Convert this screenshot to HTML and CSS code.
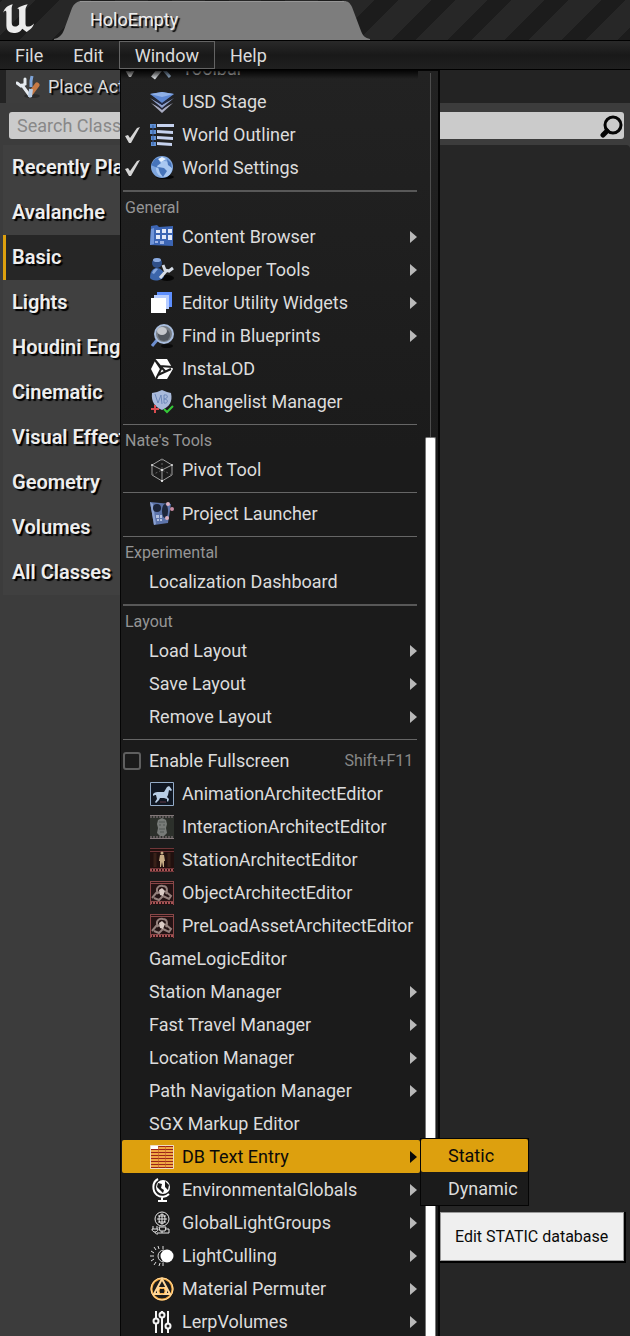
FILE: index.html
```html
<!DOCTYPE html>
<html lang="en">
<head>
<meta charset="utf-8">
<title>HoloEmpty</title>
<link rel="stylesheet" href="styles.css">
</head>
<body>
<div class="app">
  <header class="titlebar">
    <svg class="logo" viewBox="0 0 32 32" aria-hidden="true"><path fill="#ececec" d="M3 12C4 8 7 5 12 4c-1 2-1 3-1 5v12c0 3 1 4 3 4 2 0 3-1 4-2V10c0-2-1-2-2-2 3-2 6-3 10-4-1 2-2 3-2 5v13c0 2 1 3 2 3 2 0 4-1 6-3-1 4-4 6-7 8l-4-3c-2 3-4 4-8 4-4 0-7-2-7-7V12c0-2-1-3-3 0z"/></svg>
    <div class="doc-tab">
      <svg class="tab-edge" viewBox="0 0 26 39" aria-hidden="true"><path fill="#7d7d7d" d="M0 39V38C5 37 8 34 10 29L18 7C20 3 22 1 26 0V39z"/></svg>
      <span class="doc-tab-label">HoloEmpty</span>
      <svg class="tab-edge" viewBox="0 0 26 39" aria-hidden="true"><path fill="#7d7d7d" d="M26 39V38C21 37 19 35 17 30L8 6C6 2 4 0 0 0V39z"/></svg>
    </div>
  </header>

  <nav class="menubar">
    <button type="button">File</button>
    <button type="button">Edit</button>
    <button type="button" class="open">Window</button>
    <button type="button">Help</button>
  </nav>

  <main class="panel">
    <div class="panel-tabs">
      <div class="panel-tab">
        <svg class="icon" viewBox="0 0 24 24" aria-hidden="true"><ellipse cx="16" cy="21" rx="8" ry="2" fill="#2a2a2a"/><path d="M15 18l6-8" stroke="#c77a45" stroke-width="5" stroke-linecap="round"/><path d="M15 12V6l1-5" fill="none" stroke="#7ea4d8" stroke-width="3"/><path d="M1 8l4 3 4-2V4M6 10l8 11" fill="none" stroke="#e6ebf0" stroke-width="3" stroke-linecap="round"/><path d="M15 14l-1 8" stroke="#b8cbe2" stroke-width="4"/></svg>
        Place Actors
      </div>
    </div>
    <div class="search">
      <input type="text" placeholder="Search Classes" aria-label="Search Classes">
      <svg class="icon" viewBox="0 0 24 24" aria-hidden="true"><circle cx="13" cy="11" r="8" fill="none" stroke="#050505" stroke-width="3"/><path d="M7 17l-4 4" stroke="#050505" stroke-width="5" stroke-linecap="round"/></svg>
    </div>
    <div class="panel-body">
      <div class="categories">
        <button type="button">Recently Placed</button>
        <button type="button">Avalanche</button>
        <button type="button" class="selected">Basic</button>
        <button type="button">Lights</button>
        <button type="button">Houdini Engine</button>
        <button type="button">Cinematic</button>
        <button type="button">Visual Effects</button>
        <button type="button">Geometry</button>
        <button type="button">Volumes</button>
        <button type="button">All Classes</button>
      </div>
      <div class="results"></div>
    </div>
  </main>

  <div class="dropdown">
    <div class="menu-list">
      <button type="button" class="item"><svg class="check" viewBox="0 0 18 18"><path d="M2 10l3-1 2 3 7-10 3-1L8 17H6z"/></svg><svg class="icon" viewBox="0 0 24 24"><path d="M3 21L16 5" stroke="#dfe3e6" stroke-width="5"/><path d="M8 6l12 14" stroke="#9db9d6" stroke-width="3"/></svg>Toolbar</button>
      <button type="button" class="item"><span class="check"></span><svg class="icon" viewBox="0 0 24 24"><path fill="#a8abc0" d="M1 13l11 6 11-6-11 10z"/><path fill="#25263a" d="M1 11l11 7 11-7-11 9z"/><path fill="#8d9fce" d="M0 8l12 7 12-7-12 10z"/><path fill="#202b51" d="M0 6l12 7 12-7-12 9z"/><path fill="#5d87d3" d="M0 4l12-2 12 2-12 9z"/><path fill="#8fb0e6" d="M0 4l12-2 12 2-12 3z"/></svg>USD Stage</button>
      <button type="button" class="item"><svg class="check" viewBox="0 0 18 18"><path d="M2 10l3-1 2 3 7-10 3-1L8 17H6z"/></svg><svg class="icon" viewBox="0 0 24 24"><path fill="#5e8fd3" d="M0 1h6v4H0zM0 7h6v4H0zM1 13h5v4H1zM1 19h5v4H1z"/><path d="M3 2v20" stroke="#34599b" stroke-width="1"/><path fill="#c6d2ee" d="M7 1h17v3L7 4zM7 7l16 1v3L7 10zM7 13l16 1v3L7 16zM7 19l15 1v3L7 22z"/></svg>World Outliner</button>
      <button type="button" class="item"><svg class="check" viewBox="0 0 18 18"><path d="M2 10l3-1 2 3 7-10 3-1L8 17H6z"/></svg><svg class="icon" viewBox="0 0 24 24"><ellipse cx="15" cy="21" rx="9" ry="2" fill="#060606"/><circle cx="12" cy="11" r="11" fill="#7ea6df"/><circle cx="14" cy="13" r="8" fill="#a9c8f1"/><path fill="#4674ba" d="M1 9l4-6 6-2-2 4 2 2-4 3 1 2-5-2zM8 11l6 1 3 3-4 6-3-4zM17 3l4 4 1 5-4-3z"/><path fill="#e7f2ff" d="M8 3l4-2 4 2-5 3z"/></svg>World Settings</button>

      <hr class="strong">
      <h2>General</h2>
      <button type="button" class="item sub"><span class="check"></span><svg class="icon" viewBox="0 0 24 24"><path fill="#3c65b4" d="M1 1l6-1 2 2 14-1v20L0 20z"/><path fill="#7094d8" d="M1 4l3-1v16l-4 1z"/><path fill="#e3e9f9" d="M6 5h4v3H6zM12 4h4v4h-4zM18 4h4v4h-4zM6 10h4v4H6zM12 10h4v4h-4zM18 10h4v5h-4z"/><path fill="#9cb2e4" d="M5 16h3v2H5zM10 16h4v3h-4z"/></svg>Content Browser</button>
      <button type="button" class="item sub"><span class="check"></span><svg class="icon" viewBox="0 0 24 24"><ellipse cx="17" cy="20" rx="7" ry="3" fill="#070707"/><path fill="#3c65aa" d="M0 20c0-8 4-10 7-10s8 3 7 8-12 6-14 2z"/><circle cx="7" cy="5" r="5" fill="#2f4f88"/><ellipse cx="7" cy="2" rx="4" ry="2" fill="#8cabe0"/><path fill="#85a6dc" d="M2 15c2-5 4-5 6-4l-4 5z"/><path d="M10 20l7-8M13 7l2 5 4 1 4-3" fill="none" stroke="#d5dce6" stroke-width="3"/></svg>Developer Tools</button>
      <button type="button" class="item sub"><span class="check"></span><svg class="icon" viewBox="0 0 24 24"><path fill="#5d8fff" d="M7 1h15v15H7z"/><path fill="#b6ccff" d="M4 4h15v14H4z"/><path fill="#fff" d="M1 7h15v15H1z"/></svg>Editor Utility Widgets</button>
      <button type="button" class="item sub"><span class="check"></span><svg class="icon" viewBox="0 0 24 24"><ellipse cx="17" cy="22" rx="6" ry="2" fill="#0a0a0a"/><path d="M7 16l-5 6" stroke="#6d8fd0" stroke-width="3"/><circle cx="14" cy="10" r="9" fill="#777d85" stroke="#a8bddd" stroke-width="2"/><circle cx="14" cy="11" r="6" fill="#51575f"/><ellipse cx="12" cy="7" rx="5" ry="4" fill="#c4c7cc"/></svg>Find in Blueprints</button>
      <button type="button" class="item"><span class="check"></span><svg class="icon" viewBox="0 0 24 24"><path fill="#fff" d="M6 2h11l6 10-6 10H6L1 12z"/><path d="M5 3l6 9-5 10M5 3l5 6 13 1M8 18l13-6M10 9l5 5" fill="none" stroke="#1d1d1d" stroke-width="2"/></svg>InstaLOD</button>
      <button type="button" class="item"><span class="check"></span><svg class="icon" viewBox="0 0 24 24"><path fill="#a9badb" d="M2 3l5-1 5-2 5 2 4 1c2 9-2 14-9 17C5 17 1 12 2 3z"/><path d="M5 4l3 9 3-8 1 9M14 5v8M14 5c5-1 4 4 0 4 5 0 4 5 0 4" fill="none" stroke="#6b86b8" stroke-width="1"/><path d="M1 19h8M5 15v8" stroke="#d94b4f" stroke-width="2"/><path d="M14 19l3 3 6-6" fill="none" stroke="#35c938" stroke-width="2"/></svg>Changelist Manager</button>

      <hr>
      <h2>Nate's Tools</h2>
      <button type="button" class="item"><span class="check"></span><svg class="icon" viewBox="0 0 24 24"><path d="M12 1l10 6v10l-10 6-10-6V7zM2 7l10 5 10-5M12 12v11" fill="none" stroke="#a0a0a0"/><path d="M12 1v11M2 17l10-5 10 5" fill="none" stroke="#666" stroke-dasharray="2 2"/><circle cx="12" cy="12" r="1" fill="#fff"/><circle cx="12" cy="23" r="1" fill="#fff"/><circle cx="2" cy="7" r="1" fill="#ddd"/><circle cx="22" cy="7" r="1" fill="#ddd"/></svg>Pivot Tool</button>

      <hr>
      <button type="button" class="item"><span class="check"></span><svg class="icon" viewBox="0 0 24 24"><path fill="#5d74aa" d="M0 0l21 2-3 19L4 23z"/><path fill="#8aa0d0" d="M0 0l3 2 3 20-2 1z"/><circle cx="7" cy="6" r="4" fill="#1c2438"/><ellipse cx="15" cy="9" rx="3" ry="7" fill="#1e273c"/><path fill="#b3c0df" d="M6 13h3v3H6zM10 13h2v3h-2zM7 17h2v2H7zM10 17h2v2h-2z"/><circle cx="18" cy="2" r="2" fill="#dcb1c2"/><circle cx="22" cy="7" r="2" fill="#c88ca2"/><circle cx="17" cy="16" r="2" fill="#dcb1c2"/></svg>Project Launcher</button>

      <hr>
      <h2>Experimental</h2>
      <button type="button" class="item"><span class="check"></span>Localization Dashboard</button>

      <hr class="strong">
      <h2>Layout</h2>
      <button type="button" class="item sub"><span class="check"></span>Load Layout</button>
      <button type="button" class="item sub"><span class="check"></span>Save Layout</button>
      <button type="button" class="item sub"><span class="check"></span>Remove Layout</button>

      <hr>
      <label class="item"><input type="checkbox">Enable Fullscreen<kbd>Shift+F11</kbd></label>
      <button type="button" class="item"><span class="check"></span><svg class="icon" viewBox="0 0 24 24"><path fill="#101722" stroke="#93abc6" d="M.5.5h23v23H.5z"/><path fill="#b7cde4" d="M3 12c2-2 4-2 6-2h5l3-5 2-1 1 1 2 3-1 1-2-1-1 5-1 2 2 2-1 3-1-1v-2l-3-1-4 0-1 2-3 3-1-1 2-3-1-4c-1 0-2 0-3 1z"/><path d="M10 20h6" stroke="#633b47"/></svg>AnimationArchitectEditor</button>
      <button type="button" class="item"><span class="check"></span><svg class="icon" viewBox="0 0 24 24"><path fill="#2c302b" d="M0 0h24v24H0z"/><path d="M0 2h24M0 22h24" stroke="#5e5859" stroke-width="2" stroke-dasharray="2 1"/><path d="M0 .5h24M0 23.500h24" stroke="#827879"/><path fill="#777b78" d="M8 5l4-2 4 2 1 4-1 4 1 5-3 3h-4l-3-3 1-5-1-4z"/><path d="M9 7h6M9 10h2M13 10h2M9 14h6M10 17h4" stroke="#535854"/></svg>InteractionArchitectEditor</button>
      <button type="button" class="item"><span class="check"></span><svg class="icon" viewBox="0 0 24 24"><path fill="#21100e" d="M0 0h24v24H0z"/><path d="M0 22h24" stroke="#a65355" stroke-width="2" stroke-dasharray="2 1"/><path d="M0 .5h24M0 3.500h24M0 20.500h24M0 23.500h24" stroke="#703638"/><path d="M5 5v14M19 5v14" stroke="#392018" stroke-width="3"/><circle cx="12" cy="5" r="1.500" fill="#c7ac84"/><path fill="#c7ac84" d="M10 7h4l1 6h-1v6h-1l-1-5-1 5h-1v-6H9z"/></svg>StationArchitectEditor</button>
      <button type="button" class="item"><span class="check"></span><svg class="icon" viewBox="0 0 24 24"><path fill="#241314" d="M0 0h24v24H0z"/><path d="M0 22h24" stroke="#a65355" stroke-width="2" stroke-dasharray="2 1"/><path d="M0 .5h24M0 2.500h24M0 20.500h24M.5 0v24M23.500 0v24" stroke="#8a4748"/><path d="M2 17l5-6 3 1M8 13c-3-6 1-9 5-8 4 0 5 4 3 8M15 10l6 5-2 3-6-3-4 4-5-2" fill="none" stroke="#94807c" stroke-width="2"/><path fill="#dacbc5" d="M9 9l3-2 3 3-2 5-3-1z"/></svg>ObjectArchitectEditor</button>
      <button type="button" class="item"><span class="check"></span><svg class="icon" viewBox="0 0 24 24"><path fill="#241314" d="M0 0h24v24H0z"/><path d="M0 22h24" stroke="#a65355" stroke-width="2" stroke-dasharray="2 1"/><path d="M0 .5h24M0 2.500h24M0 20.500h24M.5 0v24M23.500 0v24" stroke="#8a4748"/><path d="M2 17l5-6 3 1M8 13c-3-6 1-9 5-8 4 0 5 4 3 8M15 10l6 5-2 3-6-3-4 4-5-2" fill="none" stroke="#94807c" stroke-width="2"/><path fill="#dacbc5" d="M9 9l3-2 3 3-2 5-3-1z"/></svg>PreLoadAssetArchitectEditor</button>
      <button type="button" class="item"><span class="check"></span>GameLogicEditor</button>
      <button type="button" class="item sub"><span class="check"></span>Station Manager</button>
      <button type="button" class="item sub"><span class="check"></span>Fast Travel Manager</button>
      <button type="button" class="item sub"><span class="check"></span>Location Manager</button>
      <button type="button" class="item sub"><span class="check"></span>Path Navigation Manager</button>
      <button type="button" class="item"><span class="check"></span>SGX Markup Editor</button>
      <button type="button" class="item sub active"><span class="check"></span><svg class="icon" viewBox="0 0 24 24"><path fill="#efa743" d="M0 0h24v24H0z"/><path fill="#fff" d="M1 1h7v3H1z"/><path d="M1 4.500h22M1 7.500h22M1 10.500h22M1 13.500h22M1 16.500h22M1 19.500h22M8 1.500h15M1 22.500h22" stroke="#9c2418"/><path d="M8.500 1v22M15.500 1v22" stroke="#bd5a2c" stroke-opacity=".6"/><path fill="none" stroke="#efdcc0" d="M.5.5h23v23H.5z"/></svg>DB Text Entry</button>
      <button type="button" class="item sub"><span class="check"></span><svg class="icon" viewBox="0 0 24 24"><path d="M8 1C2 4 2 13 7 17c4 3 9 2 12-1M12 18v4M8 23h9" fill="none" stroke="#fff" stroke-width="2"/><circle cx="13" cy="9" r="7" fill="#fff"/><path fill="#1a1a1a" d="M8 5l4 1-1 4 3 2-1 3-3-3-3-3zM15 3l4 4-1 5-3-3z"/></svg>EnvironmentalGlobals</button>
      <button type="button" class="item sub"><span class="check"></span><svg class="icon" viewBox="0 0 24 24"><g fill="none" stroke="#e5e5e5"><circle cx="12" cy="8" r="7"/><ellipse cx="12" cy="8" rx="3" ry="5"/><path d="M7 8h10M8 5h8M8 11h8M12 3v10M9 16h7l-1 4h-5zM12 20v2M15 18h4v4H7M3 15v3M7 15v3M2 18h6c0 4-6 4-6 0M5 21c0 2 2 2 3 2"/></g></svg>GlobalLightGroups</button>
      <button type="button" class="item sub"><span class="check"></span><svg class="icon" viewBox="0 0 24 24"><path d="M14 6a6 6 0 1 0 0 12" fill="none" stroke="#ddd" stroke-width="1"/><path d="M0 12h4M1 7l3 2M4 3l2 3M8 2l1 3M13 2v3M1 17l3-2M4 21l2-3M9 22l1-3M13 22v-3" stroke="#ddd"/><circle cx="17" cy="12" r="6.500" fill="#fff"/></svg>LightCulling</button>
      <button type="button" class="item sub"><span class="check"></span><svg class="icon" viewBox="0 0 24 24"><g fill="none" stroke="#f2a63a" stroke-width="2"><circle cx="12" cy="12" r="10.500"/><circle cx="12" cy="12" r="11" stroke="#ffdca5" stroke-width="1"/><path stroke="#ffd697" d="M12 2l8 15H4zM8 11h8v6H8z"/><circle cx="12" cy="14" r="3" stroke-width="1"/></g></svg>Material Permuter</button>
      <button type="button" class="item sub"><span class="check"></span><svg class="icon" viewBox="0 0 24 24"><g fill="none" stroke="#f4f4f4" stroke-width="2"><path d="M6 1v7M6 13v10M12 1v1M12 7v16M18 1v13M18 19v4"/><circle cx="6" cy="11" r="2.500"/><circle cx="12" cy="5" r="2.500"/><circle cx="18" cy="16" r="2.500"/></g></svg>LerpVolumes</button>
    </div>
    <div class="scrollbar"><div class="thumb"></div></div>
  </div>

  <div class="submenu">
    <button type="button" class="active">Static</button>
    <button type="button">Dynamic</button>
  </div>
  <div class="tooltip" role="tooltip">Edit STATIC database</div>
</div>
</body>
</html>
```

FILE: styles.css
```css
* { box-sizing: border-box; }

html, body { height: 100%; margin: 0; }

body {
  overflow: hidden;
  background: #3c3c3c;
  color: #dcdcdc;
  font: 18px/24px Roboto, "Liberation Sans", sans-serif;
}

button {
  margin: 0;
  border: 0;
  background: none;
  color: inherit;
  font: inherit;
  text-align: left;
}

.app {
  position: relative;
  display: flex;
  flex-direction: column;
  height: 100vh;
  overflow: hidden;
}

.icon { flex: none; width: 24px; height: 24px; }

/* Title bar */
.titlebar {
  display: flex;
  align-items: flex-end;
  flex: none;
  height: 41px;
  gap: 20px;
  border-bottom: 1px solid #000;
  background: repeating-linear-gradient(135deg, #1c1c1c 0 2px, #272727 2px 25px, #1c1c1c 25px 40px);
}
.logo { align-self: flex-start; width: 34px; height: 34px; }
.doc-tab { display: flex; flex: 0 1 316px; height: 39px; }
.tab-edge { flex: none; width: 26px; height: 39px; }
.doc-tab-label {
  flex: 1;
  padding: 6px 10px;
  border-top: 1px solid #969696;
  background: #7d7d7d;
  color: #eee;
  text-shadow: 2px 2px 1px #000;
}

/* Menu bar */
.menubar {
  display: flex;
  flex: none;
  height: 29px;
  border-bottom: 1px solid #000;
  background: linear-gradient(#292929, #191919 50%, #202020);
}
.menubar button { padding: 1px 15px 0; line-height: 28px; }
.menubar .open { border: 1px solid #646464; line-height: 26px; }

/* Place Actors panel */
.panel { display: flex; flex: 1; flex-direction: column; }
.panel-tabs { display: flex; padding-left: 6px; background: #232323; }
.panel-tab {
  display: flex;
  align-items: center;
  gap: 8px;
  width: 160px;
  height: 33px;
  padding-left: 10px;
  background: #3d3d3d;
  text-shadow: 2px 2px 1px #000;
}
.search {
  display: flex;
  align-items: center;
  height: 27px;
  margin: 9px 6px 6px 9px;
  border-radius: 3px;
  background: #cbcbcb;
}
.search input {
  flex: 1;
  min-width: 0;
  padding: 0 8px;
  border: 0;
  outline: 0;
  background: none;
  color: #222;
  font: inherit;
}
.search input::placeholder { color: #888; opacity: 1; }
.panel-body { display: grid; flex: 1; grid-template-columns: 200px 1fr; padding-left: 3px; }
.categories { display: flex; flex-direction: column; align-self: start; background: #404040; }
.categories button {
  height: 45px;
  padding: 0 9px 2px;
  color: #eee;
  font-size: 20px;
  font-weight: 600;
  text-shadow: 2px 2px 1px #000;
}
.categories .selected { padding-left: 6px; border-left: 3px solid #dda00e; background: #262626; }
.results { border-radius: 0 4px 0 0; background: #262626; }

/* Window menu */
.dropdown {
  position: absolute;
  top: 70px;
  bottom: 0;
  left: 120px;
  display: flex;
  width: 320px;
  overflow: hidden;
  border: solid #050505;
  border-width: 1px 2px 0 1px;
  background: linear-gradient(#222, #1b1b1b 30%);
}
.dropdown::before {
  position: absolute;
  inset: 0 20px auto 0;
  height: 8px;
  background: linear-gradient(#000c, #0000);
  content: "";
}
.menu-list { display: flex; flex: 1; flex-direction: column; margin-top: -19px; padding-left: 1px; }
.item {
  display: flex;
  align-items: center;
  flex: none;
  height: 33px;
  padding: 0 7px 0 1px;
  border-radius: 2px;
}
.item .icon { margin: 0 8px 0 1px; }
.check { flex: none; width: 18px; height: 18px; margin-right: 8px; fill: #d6d6d6; }
.item input {
  width: 18px;
  height: 18px;
  margin: 0 8px 0 0;
  appearance: none;
  border: 2px solid #5f5f5f;
  border-radius: 3px;
}
.item kbd { margin-left: auto; color: #888; font: inherit; font-size: 16px; }
.sub { padding-right: 3px; }
.sub::after {
  margin-left: auto;
  border: solid transparent;
  border-width: 6px 0 6px 7px;
  border-left-color: #b9b9b9;
  content: "";
}
.item.active { background: #dda00e; color: #0a0a0a; }
.item.active::after { border-left-color: #0a0a0a; }
.menu-list hr {
  flex: none;
  width: calc(100% - 4px);
  height: 1px;
  margin: 6px 0 4px 1px;
  border: 0;
  background: #666;
}
.menu-list hr.strong { height: 2px; background: #585858; }
.menu-list h2 { flex: none; margin: 0; padding-left: 3px; color: #959595; font-size: 16px; font-weight: 400; }

.scrollbar {
  flex: none;
  width: 11px;
  margin: 2px 2px 0 5px;
  padding-top: 364px;
  background: linear-gradient(#4c4c4c, #4c4c4c) 5px 0 / 1px 100% no-repeat;
}
.thumb { height: 100%; border: 1px solid #777; border-bottom: 0; border-radius: 2px 2px 0 0; background: #fff; }

/* Flyout and its hint */
.submenu {
  position: absolute;
  top: 1138px;
  left: 420px;
  display: flex;
  flex-direction: column;
  border: 1px solid #050505;
  background: #1b1b1b;
}
.submenu button { height: 33px; padding: 0 10px 0 27px; border-radius: 2px; }
.submenu .active { background: #dda00e; color: #0a0a0a; }
.tooltip {
  position: absolute;
  top: 1212px;
  left: 440px;
  padding: 12px 15px 11px 14px;
  border: 1px solid #999;
  background: #efefef;
  box-shadow: 1px 1px 0 1px #000;
  color: #0a0a0a;
  font-size: 16px;
}
```
